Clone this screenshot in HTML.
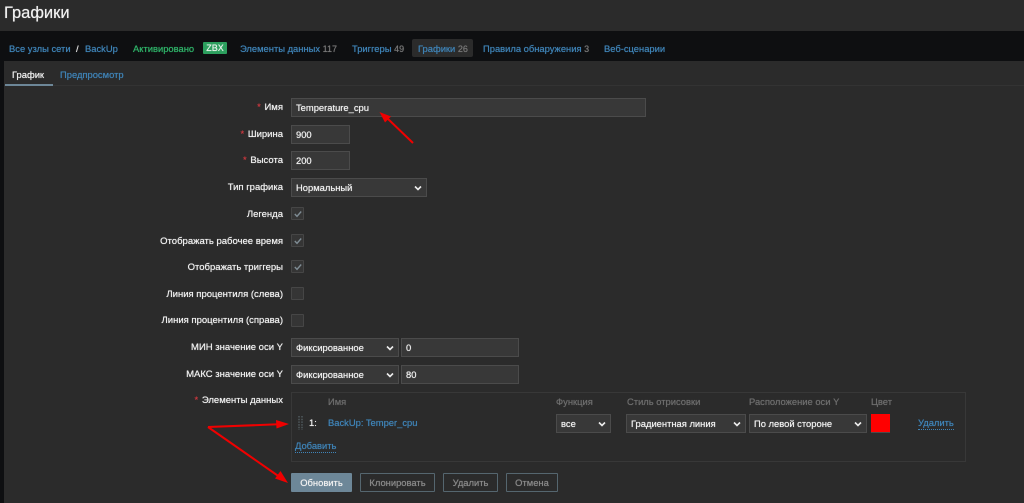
<!DOCTYPE html>
<html><head><meta charset="utf-8"><style>
html,body{margin:0;padding:0;background:#2b2b2b}
body{width:1024px;height:503px;position:relative;overflow:hidden;font-family:"Liberation Sans",sans-serif;font-size:9.4px;color:#f2f2f2;text-shadow:0 0 .6px currentColor}
div,span.a{position:absolute;white-space:nowrap;box-sizing:border-box}
.t{height:14px;line-height:14px}
.l{color:#3f84b8}
.c{color:#787878;font-size:9px}
.lb{right:741px;color:#f2f2f2;height:14px;line-height:14px;font-size:9.5px;margin-top:1px}
.lb b{color:#c9383f;font-weight:normal;margin-right:1px}
.i{background:#383838;border:1px solid #4b4b4b;padding-left:4px;color:#f2f2f2;line-height:18px}
.cb{width:13px;height:13px;left:291px;background:#353535;border:1px solid #464646;border-radius:1px}
.h{color:#6e6e6e;height:14px;line-height:14px}
.b{top:473px;height:19px;border:1px solid #55666f;border-radius:1px;color:#8a8a8a;text-align:center;line-height:18px}
.u{border-bottom:1px dotted #3f84b8;line-height:13px;height:14px}
svg{position:absolute}
</style></head><body>
<div style="left:0;top:0;width:1024px;height:31px;background:#2b2b2b"></div>
<div style="left:4px;top:1px;font-size:16.5px;line-height:24px;color:#f2f2f2">Графики</div>
<div style="left:0;top:31px;width:1024px;height:30px;background:#0e0f11"></div>
<div style="left:0;top:61px;width:4px;height:442px;background:#0e0f11"></div>

<div class="t l" style="left:9px;top:42px">Все узлы сети</div>
<div class="t" style="left:76px;top:42px;color:#e8e8e8">/</div>
<div class="t l" style="left:85px;top:42px">BackUp</div>
<div class="t" style="left:133px;top:42px;color:#2fb56a">Активировано</div>
<div style="left:203px;top:42px;width:24px;height:12px;background:#2c9f5e;border-radius:1px;color:#e8f3ec;font-size:9px;line-height:13px;text-align:center">ZBX</div>
<div class="t" style="left:240px;top:42px"><span class="l">Элементы данных</span> <span class="c">117</span></div>
<div class="t" style="left:352px;top:42px"><span class="l">Триггеры</span> <span class="c">49</span></div>
<div style="left:412px;top:39px;width:61px;height:18px;background:#2b2b2b;border-radius:2px"></div>
<div class="t" style="left:418px;top:42px"><span class="l">Графики</span> <span class="c">26</span></div>
<div class="t" style="left:483px;top:42px"><span class="l">Правила обнаружения</span> <span class="c">3</span></div>
<div class="t l" style="left:604px;top:42px">Веб-сценарии</div>

<div style="left:4px;top:85px;width:1020px;height:1px;background:#333"></div>
<div class="t" style="left:12px;top:68px">График</div>
<div style="left:5px;top:84px;width:48px;height:2px;background:#6d8798"></div>
<div class="t l" style="left:60px;top:68px">Предпросмотр</div>

<div class="lb" style="top:100px"><b>*</b> Имя</div>
<div class="i" style="left:291px;top:98px;width:355px;height:19px">Temperature_cpu</div>
<div class="lb" style="top:127px"><b>*</b> Ширина</div>
<div class="i" style="left:291px;top:125px;width:59px;height:19px">900</div>
<div class="lb" style="top:153px"><b>*</b> Высота</div>
<div class="i" style="left:291px;top:151px;width:59px;height:19px">200</div>
<div class="lb" style="top:180px">Тип графика</div>
<div class="i" style="left:291px;top:178px;width:136px;height:19px">Нормальный<svg style="right:4px;top:6px" width="8" height="6" viewBox="0 0 8 6"><path d="M1 1.5 4 4.5 7 1.5" fill="none" stroke="#ececec" stroke-width="1.6"/></svg></div>

<div class="lb" style="top:207px">Легенда</div>
<div class="cb" style="top:207px"><svg style="left:2px;top:2px" width="8" height="8" viewBox="0 0 8 8"><path d="M.8 4 3 6.3 7.2 1.5" fill="none" stroke="#7f8c94" stroke-width="1.4"/></svg></div>
<div class="lb" style="top:234px">Отображать рабочее время</div>
<div class="cb" style="top:234px"><svg style="left:2px;top:2px" width="8" height="8" viewBox="0 0 8 8"><path d="M.8 4 3 6.3 7.2 1.5" fill="none" stroke="#7f8c94" stroke-width="1.4"/></svg></div>
<div class="lb" style="top:260px">Отображать триггеры</div>
<div class="cb" style="top:260px"><svg style="left:2px;top:2px" width="8" height="8" viewBox="0 0 8 8"><path d="M.8 4 3 6.3 7.2 1.5" fill="none" stroke="#7f8c94" stroke-width="1.4"/></svg></div>
<div class="lb" style="top:287px">Линия процентиля (слева)</div>
<div class="cb" style="top:287px"></div>
<div class="lb" style="top:313px">Линия процентиля (справа)</div>
<div class="cb" style="top:314px"></div>

<div class="lb" style="top:340px">МИН значение оси Y</div>
<div class="i" style="left:291px;top:338px;width:108px;height:19px">Фиксированное<svg style="right:4px;top:6px" width="8" height="6" viewBox="0 0 8 6"><path d="M1 1.5 4 4.5 7 1.5" fill="none" stroke="#ececec" stroke-width="1.6"/></svg></div>
<div class="i" style="left:401px;top:338px;width:118px;height:19px">0</div>
<div class="lb" style="top:367px">МАКС значение оси Y</div>
<div class="i" style="left:291px;top:365px;width:108px;height:19px">Фиксированное<svg style="right:4px;top:6px" width="8" height="6" viewBox="0 0 8 6"><path d="M1 1.5 4 4.5 7 1.5" fill="none" stroke="#ececec" stroke-width="1.6"/></svg></div>
<div class="i" style="left:401px;top:365px;width:118px;height:19px">80</div>
<div class="lb" style="top:393px"><b>*</b> Элементы данных</div>

<div style="left:291px;top:392px;width:675px;height:70px;border:1px solid #383838"></div>
<div class="h" style="left:328px;top:395px">Имя</div>
<div class="h" style="left:556px;top:395px">Функция</div>
<div class="h" style="left:627px;top:395px">Стиль отрисовки</div>
<div class="h" style="left:749px;top:395px">Расположение оси Y</div>
<div class="h" style="left:871px;top:395px">Цвет</div>
<svg style="left:298px;top:416px" width="6" height="14"><g stroke="#4f5a5e" stroke-width="1.5" stroke-dasharray="1.5 1.2"><path d="M1 0V14M4 0V14"/></g></svg>
<div class="t" style="left:309px;top:416px">1:</div>
<div class="t l" style="left:328px;top:416px">BackUp: Temper_cpu</div>
<div class="i" style="left:556px;top:414px;width:55px;height:19px">все<svg style="right:4px;top:6px" width="8" height="6" viewBox="0 0 8 6"><path d="M1 1.5 4 4.5 7 1.5" fill="none" stroke="#ececec" stroke-width="1.6"/></svg></div>
<div class="i" style="left:626px;top:414px;width:120px;height:19px">Градиентная линия<svg style="right:4px;top:6px" width="8" height="6" viewBox="0 0 8 6"><path d="M1 1.5 4 4.5 7 1.5" fill="none" stroke="#ececec" stroke-width="1.6"/></svg></div>
<div class="i" style="left:749px;top:414px;width:118px;height:19px">По левой стороне<svg style="right:4px;top:6px" width="8" height="6" viewBox="0 0 8 6"><path d="M1 1.5 4 4.5 7 1.5" fill="none" stroke="#ececec" stroke-width="1.6"/></svg></div>
<div style="left:871px;top:414px;width:19px;height:19px;background:#ff0000;border:1px solid #4b4b4b;border-width:0 0 1px 0"></div>
<div class="l u" style="left:918px;top:416px">Удалить</div>
<div class="l u" style="left:295px;top:439px">Добавить</div>

<div class="b" style="left:291px;width:61px;background:#6d8798;border-color:#6d8798;color:#f2f2f2">Обновить</div>
<div class="b" style="left:360px;width:75px">Клонировать</div>
<div class="b" style="left:443px;width:55px">Удалить</div>
<div class="b" style="left:506px;width:52px">Отмена</div>

<svg style="left:0;top:0" width="1024" height="503" viewBox="0 0 1024 503">
<g fill="none" stroke="#f00000" stroke-width="2">
<path d="M413 143 386 117"/>
<path d="M208 427 278 424.3"/>
<path d="M208 427 279 476.5"/>
</g>
<g fill="#f00000">
<path d="M379.5 112 391 116.5 385 122.5Z"/>
<path d="M289 424 276 420 276.5 428.5Z"/>
<path d="M288 483 275 478.5 280.5 471Z"/>
</g>
</svg>
</body></html>
